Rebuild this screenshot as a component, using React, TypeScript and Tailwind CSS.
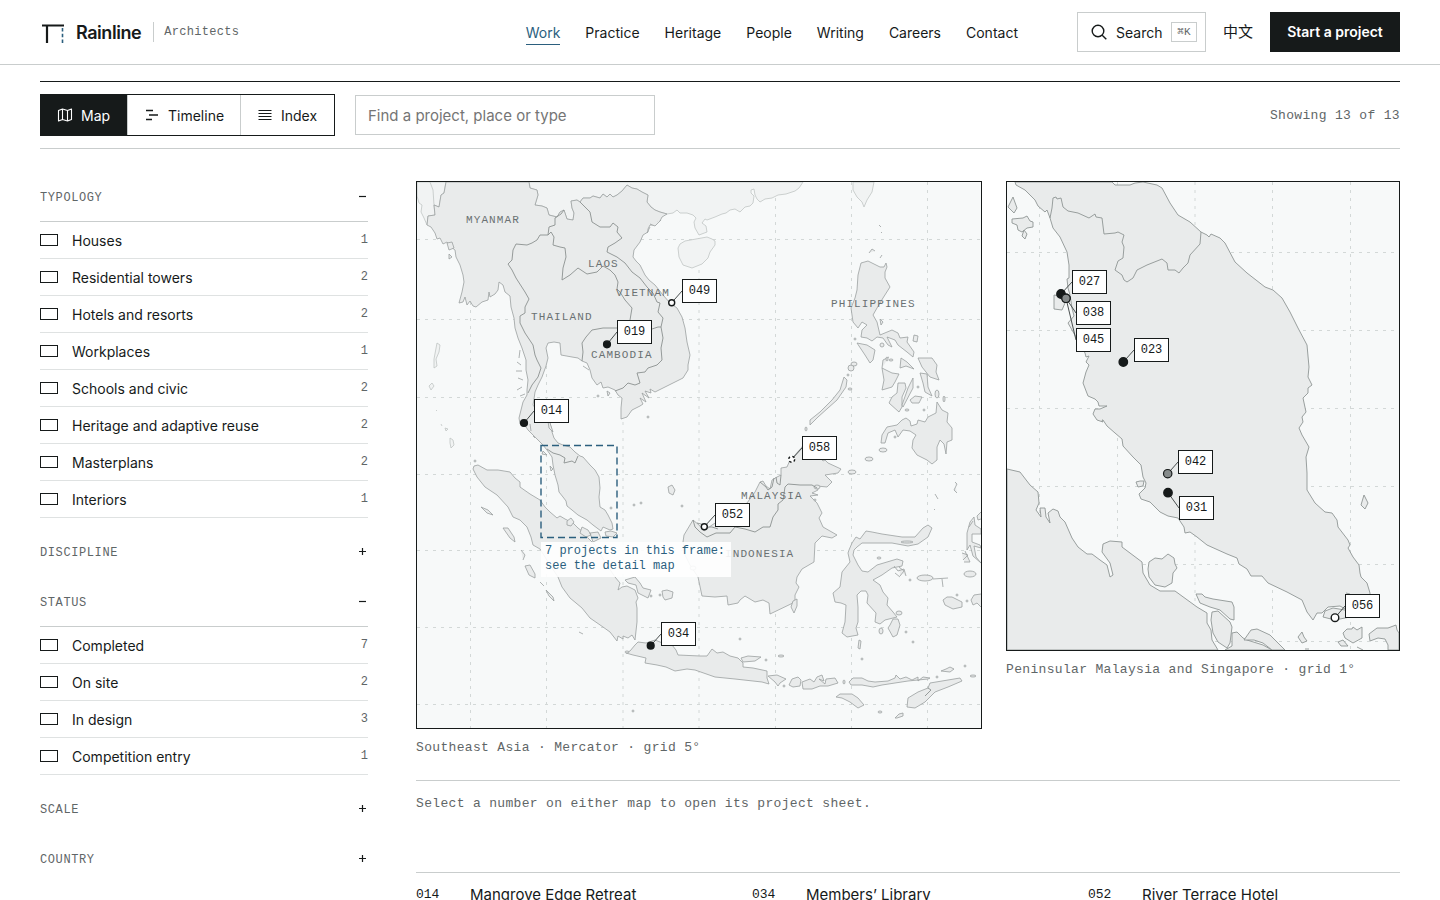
import type { ReactNode } from "react";

type Marker = "solid" | "grey" | "open" | "dashed";
type Pin = { id: string; x: number; y: number; bx: number; by: number; kind: Marker };
type Frame = { x: number; y: number; w: number; h: number };

const REGION: Frame = { x: 417, y: 182, w: 564, h: 546 };
const DETAIL: Frame = { x: 1007, y: 182, w: 392, h: 468 };

const regionPins: Pin[] = [
  { id: "049", x: 671.7, y: 302.7, bx: 682, by: 279, kind: "open" },
  { id: "019", x: 607, y: 344.3, bx: 617, by: 320, kind: "solid" },
  { id: "014", x: 524, y: 423, bx: 534, by: 399, kind: "solid" },
  { id: "058", x: 791.7, y: 459.3, bx: 802, by: 436, kind: "dashed" },
  { id: "052", x: 704.3, y: 526.7, bx: 715, by: 503, kind: "open" },
  { id: "034", x: 650.7, y: 645.7, bx: 661, by: 622, kind: "solid" },
];

const detailPins: Pin[] = [
  { id: "027", x: 1061, y: 294, bx: 1072, by: 270, kind: "solid" },
  { id: "038", x: 1066, y: 298.3, bx: 1076, by: 301, kind: "grey" },
  { id: "045", x: 1066, y: 298.3, bx: 1076, by: 328, kind: "grey" },
  { id: "023", x: 1123.3, y: 362, bx: 1134, by: 338, kind: "solid" },
  { id: "042", x: 1167.7, y: 473.7, bx: 1178, by: 450, kind: "grey" },
  { id: "031", x: 1168, y: 492.7, bx: 1179, by: 496, kind: "solid" },
  { id: "056", x: 1335, y: 617.7, bx: 1345, by: 594, kind: "open" },
];

const countries = [
  { name: "MYANMAR", x: 466, y: 223 },
  { name: "LAOS", x: 588, y: 267 },
  { name: "VIETNAM", x: 616, y: 296 },
  { name: "THAILAND", x: 531, y: 320 },
  { name: "CAMBODIA", x: 591, y: 358 },
  { name: "PHILIPPINES", x: 831, y: 307 },
  { name: "MALAYSIA", x: 741, y: 499 },
  { name: "INDONESIA", x: 725, y: 557 },
];

const neighbours = [
  "M417 182L446 182 444 193 441 195 439 207 434 205 435 215 428 216 427 225 424 218 421 212 422 205 419 203 417 196Z",
  "M430 182L433 190 434 205",
  "M529 182L530 188 537 190 538 195 535 205 542 206 547 208 549 215 557 217 560 212 564 210 567 219 573 220 574 213 572 208 571 201 577 200 580 202 583 198 590 198 593 196 600 198 603 194 607 197 610 194 613 197 617 195 622 191 627 185 632 188 637 189 642 192 648 195 647 202 651 207 655 210 660 212 667 214 673 213 677 210 680 213 687 213 693 215 696 218 694 222 695 228 699 235 707 232 706 226 702 223 705 219 707 220 715 217 722 214 726 213 730 210 735 209 740 212 745 207 750 206 753 203 754 196 751 193 751 190 754 189 755 195 757 199 760 202 765 199 772 198 778 195 786 194 795 191 799 188 803 182Z",
  "M678 248L680 244 685 241 696 239 707 237 712 239 715 241 715 245 710 252 708 258 702 264 692 268 683 265 679 257Z",
  "M853 182L853 190 857 197 862 202 864 207 867 200 872 192 874 182Z",
];

const mainland =
  "M446 182L529 182 530 188 537 190 538 195 535 205 542 206 547 208 549 215 557 217 560 212 564 210 567 219 573 220 574 213 572 208 571 201 577 200 580 202 583 198 590 198 593 196 600 198 603 194 607 197 610 194 613 197 617 195 622 191 627 185 632 188 637 189 642 192 648 195 647 202 651 207 655 210 660 212 667 214 662 217 660 221 657 222 655 225 650 225 648 229 648 232 643 235 640 242 634 250 633 257 636 261 640 265 645 275 649 280 655 285 663 295 670 303 677 308 682 317 685 328 687 342 690 355 688 365 688 370 683 378 673 383 663 388 655 392 650 389 651 393 645 391 649 398 642 393 646 402 640 398 643 404 640 406 632 410 627 417 621 419 621 408 622 398 618 395 615 390 608 387 603 388 601 382 597 385 592 378 590 370 587 363 582 361 578 358 572 357 561 355 560 343 554 342 548 343 546 348 548 358 546 366 542 377 538 385 535 392 534 399 533 405 538 412 548 415 550 423 552 432 554 438 558 443 563 445 570 447 575 452 580 456 583 457 590 465 595 470 599 477 600 488 599 497 600 507 605 510 608 515 612 523 613 529 610 530 603 527 601 531 593 525 587 520 578 515 572 510 567 506 566 501 563 497 559 492 558 485 555 475 553 465 552 457 547 450 543 445 538 440 533 435 528 430 524 424 520 424 519 418 521 410 523 402 527 395 527 390 528 380 526 370 526 360 522 348 518 338 515 328 514 318 511 307 510 296 505 292 503 285 499 282 498 290 495 294 490 297 489 292 488 300 482 302 476 307 473 306 470 301 467 305 465 297 463 302 459 303 462 292 464 282 463 275 460 265 456 257 455 250 451 247 447 242 443 244 440 238 437 239 435 233 431 227 427 225 428 216 435 215 434 205 439 207 441 195 444 193Z";

const mainlandBorders =
  "M564 210L561 214 555 218 555 225 549 227 548 235 540 235 537 240 532 243 527 245 516 244 513 250 512 260 508 264 512 270 516 278 525 292 529 299 525 307 525 313 520 316 520 323 525 333 533 345 535 355 537 360 541 368 538 377 532 385 528 393M548 235L551 232 554 237 553 245 560 247 565 248 566 257 563 268 562 280 570 275 578 268 587 274 597 272 603 266 610 270 615 275 618 282 617 289 620 292 625 300 632 308 630 320 631 330 617 328 603 328 592 330 586 337 582 343 583 352 582 361M631 330L640 331 652 329 658 327 661 327M580 202L585 207 590 212 592 222 600 227 610 227 613 223 618 227 617 232 622 238 615 243 608 247 607 252 617 257 625 263 632 272 640 278 647 287 653 293 657 302 660 303 658 312 663 318 661 327 663 338 661 348 662 360 657 365 648 368 645 372 637 373 640 383 635 385 628 383 623 388 615 391M547 449L553 453 560 455 565 458 564 463 572 461 575 463 578 456";

const islands = [
  "M474 466L478 465 487 470 498 470 510 472 515 478 520 482 520 487 530 494 540 500 545 507 550 512 557 518 560 516 565 519 573 523 578 528 583 532 588 538 595 545 605 562 615 577 620 583 618 590 622 587 627 586 635 590 638 598 636 602 637 608 637 622 635 640 632 635 628 638 623 636 623 639 618 636 617 641 610 632 603 627 590 618 582 608 570 598 562 587 558 577 550 565 540 549 533 545 531 537 527 527 520 520 513 517 508 507 497 495 485 487 477 477 473 469Z",
  "M626 653L630 651 635 645 638 642 646 643 655 640 665 644 672 645 676 650 678 655 700 656 707 656 712 649 717 653 723 652 730 656 738 658 743 663 743 667 753 668 767 671 767 678 769 684 762 682 735 679 715 677 695 670 687 669 675 671 666 667 657 665 645 663 646 658 633 655Z",
  "M741 658L748 656 761 657 755 661 743 662Z",
  "M768 676L777 675 786 679 780 683 778 686 775 682Z",
  "M789 685L792 679 798 677 801 680 800 686 793 687Z",
  "M802 682L810 679 814 682 817 677 822 675 824 681 819 679 825 684 826 679 835 678 838 683 828 686 820 686 812 689 803 689Z",
  "M849 682L853 678 862 678 868 681 875 682 888 681 895 678 896 675 900 679 906 677 912 680 918 677 918 681 923 677 930 678 928 679 908 681 895 683 882 685 873 687 862 685 851 685Z",
  "M836 697L840 694 852 694 858 698 864 705 858 708 850 702 842 698Z",
  "M907 707L908 698 918 692 928 688 930 683 942 681 960 678 962 681 948 687 935 692 925 702 915 708Z",
  "M895 718L899 714 903 713 903 716 897 718Z",
  "M941 671L946 669 950 667 954 669 950 672Z",
  "M683 542L684 535 687 530 693 520 699 525 704 531 712 525 720 520 735 512 747 503 755 492 760 482 763 481 766 486 770 489 772 480 777 477 781 475 781 468 787 467 790 460 795 455 802 447 806 438 812 442 818 455 823 461 825 460 828 463 841 469 838 473 825 475 832 482 827 487 817 486 818 490 812 493 818 495 810 496 817 503 822 513 819 518 823 527 837 535 832 538 822 536 815 543 814 562 802 569 797 577 796 583 799 587 795 595 795 602 770 614 769 603 763 600 755 602 750 599 745 596 740 600 738 603 728 605 727 596 715 597 702 596 698 577 690 565 685 555Z",
  "M810 425L810 420 820 412 832 400 840 390 844 377 847 380 846 387 837 400 828 408 818 417Z",
  "M861 263L868 261 880 267 884 267 886 263 887 267 885 272 885 278 890 287 883 298 877 308 873 315 877 322 880 335 892 330 898 333 900 338 908 337 907 342 914 352 913 357 907 352 898 345 895 340 887 337 892 347 888 345 883 338 877 337 872 341 867 338 861 337 862 330 867 325 862 322 858 328 853 322 851 308 855 298 857 290 858 275Z",
  "M857 343L867 345 875 350 873 360 870 363 865 355Z",
  "M918 358L932 358 937 365 936 372 939 380 930 377 922 367Z",
  "M920 373L927 374 928 387 932 396 925 392 923 383Z",
  "M901 358L907 362 914 369 906 366 900 368Z",
  "M882 368L892 373 899 374 895 382 892 387 882 390 884 380Z",
  "M898 383L905 383 906 388 902 397 902 407 899 412 889 403 892 397 897 393Z",
  "M913 378L913 388 903 407 902 405 908 388Z",
  "M910 400L915 396 922 397 919 403 912 403Z",
  "M937 402L942 410 948 413 947 422 952 428 952 440 947 442 946 454 944 444 940 440 937 447 937 460 932 464 927 460 917 455 912 448 913 440 916 435 910 431 903 430 898 437 895 430 888 433 885 443 881 443 882 435 887 427 897 425 902 420 906 418 910 421 911 426 917 424 918 420 925 422 928 417 936 413Z",
  "M849 550L852 543 856 537 860 539 866 531 872 532 882 534 902 537 915 537 923 528 928 525 932 528 928 537 918 544 908 546 892 543 862 543 857 547 854 550 853 555 858 565 862 571 868 572 877 565 897 559 903 561 902 566 892 568 882 575 873 580 880 585 883 592 888 598 887 605 893 612 897 617 885 620 880 624 875 622 876 613 867 603 868 595 866 591 861 591 857 595 858 607 858 622 856 628 858 635 847 637 842 633 845 622 846 605 841 603 835 602 833 593 840 587 842 572 850 562 848 553Z",
  "M890 625L893 619 898 619 900 625 897 635 893 637 888 628Z",
  "M859 640L861 641 860 649 858 648Z",
  "M625 580L635 577 640 583 643 588 651 590 648 598 638 593 636 585 628 583Z",
  "M662 591L667 590 673 592 672 598 665 600 663 597Z",
  "M981 512L977 516 978 520 981 519M967 550L967 533 970 522 974 517 975 525 981 529 981 534 972 534 972 542 980 545 981 548 974 546 976 557 981 563 973 556 970 545Z",
  "M943 600L947 597 952 597 962 602 962 607 953 609 945 605Z",
  "M981 594L974 595 971 600 973 605 977 603 981 607",
  "M933 579L948 578M942 579L943 587",
  "M481 507L488 510 493 515 487 513Z",
  "M503 528L508 528 514 537 515 542 510 538Z",
  "M525 566L530 565 535 574 535 578 529 575Z",
  "M521 550L525 555 523 560M546 590L553 597 554 601 549 596Z",
  "M540 582L544 586",
  "M579 632L583 634",
  "M668 487L672 485 675 490 673 495 669 493Z",
  "M547 414L553 432 549 428ZM567 521L571 518 574 522 571 526 567 525Z",
  "M582 527L588 530 591 535 586 537 580 533ZM590 533L598 532 601 538 593 542ZM605 532L611 531 617 533 613 537 606 536Z",
  "M880 319L883 322 881 325ZM914 335L918 336 917 342 913 341ZM889 357L883 360 882 368",
  "M522 371L516 371M523 380L518 378M522 387L517 390M525 394L520 396M520 350L519 358M517 362L521 365",
  "M447 243L452 242 454 248 449 250ZM449 254L452 257 449 259Z",
  "M650 224L655 226 661 220M647 233L650 227",
  "M607 391L610 393 608 396ZM589 370L583 366M530 424L531 431M533 436L535 438M543 451L547 455 542 454Z",
  "M550 466L553 469 551 471Z",
  "M894 566L898 571 904 569 906 576M899 567L904 571 900 576M895 573L900 577",
  "M962 553L968 555 963 560M965 551L970 562 964 562M973 521L969 527",
  "M797 599L793 601 791 607 794 613 797 606Z",
  "M879 225L881 227M881 232L882 233M869 253L872 249 875 251M880 258L882 255",
  "M955 482L957 484 954 490 957 493M935 494L938 499M934 509L935 510",
];

const farIslands = [
  "M437 343L440 345 439 352 436 359 437 366 434 368 434 359ZM432 383L434 386 431 390 429 386Z",
  "M436 410L437 411M441 424L442 426M445 428L448 429 446 431ZM450 438L453 440 454 445 451 448 450 443Z",
];

const islets: [number, number, number, number][] = [
  [634, 505, 1, 1], [641, 503, 1, 1], [682, 506, 1, 1], [611, 508, 1, 1], [648, 417, 1, 1], [475, 461, 1, 1],
  [883, 450, 4, 2], [869, 459, 4, 2], [852, 472, 4, 2], [806, 429, 1, 2], [850, 389, 2, 1], [848, 375, 1, 1],
  [851, 368, 3, 3], [854, 364, 3, 2], [882, 345, 2, 2], [887, 359, 1, 2], [891, 360, 2, 1], [895, 437, 1, 1],
  [907, 410, 2, 1], [924, 410, 1, 1], [937, 394, 2, 4], [944, 399, 1, 3], [918, 387, 1, 1], [817, 487, 3, 2],
  [815, 500, 1, 1], [925, 578, 8, 3], [970, 574, 6, 3], [967, 601, 1, 1], [907, 542, 6, 1], [879, 558, 2, 1],
  [910, 580, 1, 1], [899, 613, 3, 2], [881, 631, 2, 3], [906, 632, 1, 1], [913, 642, 1, 1], [740, 639, 1, 1],
  [781, 656, 3, 1], [766, 660, 1, 1], [862, 659, 1, 1], [880, 712, 2, 1], [965, 666, 1, 1], [973, 676, 3, 1],
  [844, 682, 1, 2], [784, 686, 1, 1], [937, 677, 1, 1], [633, 711, 1, 1], [651, 596, 1, 1], [660, 595, 1, 1],
  [627, 652, 2, 1], [693, 568, 3, 2], [855, 339, 1, 1], [598, 396, 1, 1], [957, 595, 1, 1],
];

const borneoBorders =
  "M693 520L695 527 700 532 707 537 716 533 725 533 730 533 735 527 745 529 755 532 763 527 770 527 773 517 778 510 778 504 783 500 785 487 788 484 800 485 812 485 817 488M760 482L766 487 768 490 772 487 774 478M776 477L777 483 780 485 781 475M704 527L712 527 718 529M697 523L705 525M928 688L931 690 925 696";

const detailMainland =
  "M1015 182L1016 185 1025 190 1035 200 1038 206 1045 212 1047 210 1050 218 1053 228 1060 237 1067 252 1069 265 1069 278 1067 279 1068 288 1070 295 1072 308 1074 316 1068 323 1076 337 1085 353 1086 357 1089 356 1086 362 1089 365 1086 372 1083 383 1088 396 1095 399 1098 402 1099 406 1107 406 1100 409 1095 409 1093 414 1097 420 1103 422 1102 420 1103 420 1107 426 1115 433 1122 439 1123 446 1133 457 1141 465 1143 477 1146 483 1145 488 1139 494 1141 499 1150 502 1160 512 1168 516 1178 518 1184 527 1185 533 1190 532 1197 537 1207 545 1227 554 1237 558 1239 564 1247 569 1251 576 1262 576 1268 583 1287 592 1302 600 1307 612 1313 620 1317 613 1322 613 1328 607 1340 606 1347 610 1357 612 1370 607 1370 593 1367 583 1361 577 1360 573 1359 565 1353 557 1348 548 1350 545 1348 540 1338 527 1337 520 1332 513 1325 512 1315 503 1307 490 1307 473 1306 457 1309 447 1302 435 1299 428 1303 422 1302 417 1306 412 1303 398 1308 393 1308 388 1312 385 1308 377 1309 367 1307 345 1298 328 1290 312 1282 298 1273 290 1265 287 1256 280 1247 273 1235 262 1225 243 1220 238 1211 234 1209 237 1207 235 1201 232 1190 222 1178 215 1170 203 1162 188 1157 185 1143 182 1135 183 1130 185 1115 185 1112 182Z";

const detailBorder =
  "M1050 218L1052 208 1053 198 1056 197 1057 199 1061 198 1063 207 1068 211 1078 213 1089 218 1095 214 1096 217 1102 218 1103 226 1104 234 1115 233 1118 232 1124 235 1122 242 1124 247 1123 258 1118 261 1115 270 1122 275 1124 280 1127 282 1133 278 1137 270 1147 265 1162 259 1167 263 1168 270 1175 270 1179 273 1183 268 1188 263 1190 255 1200 244 1201 232";

const detailIslands = [
  "M1007 469L1020 472 1030 485 1038 492 1039 503 1036 510 1041 517 1040 508 1045 508 1046 517 1050 523 1048 513 1053 509 1058 511 1060 517 1065 522 1072 538 1078 547 1087 554 1092 554 1100 560 1107 565 1110 577 1113 575 1110 563 1102 552 1103 544 1110 541 1122 542 1122 547 1142 562 1143 573 1150 585 1160 591 1175 591 1197 607 1207 613 1207 623 1211 630 1212 640 1218 650 1007 650Z",
  "M1149 562L1155 558 1162 559 1168 554 1174 558 1175 564 1177 568 1173 573 1172 583 1165 587 1155 585 1149 577 1148 569Z",
  "M1196 594L1202 594 1205 597 1213 599 1232 602 1234 607 1234 620 1230 619 1220 610 1210 607 1200 603Z",
  "M1212 612L1218 611 1230 622 1232 627 1230 643 1227 648 1218 642 1213 633 1211 620Z",
  "M1225 650L1232 646 1232 633 1237 632 1243 638 1247 640 1263 645 1272 650Z",
  "M1244 640L1251 630 1257 629 1270 635 1285 650 1272 650 1263 643 1254 640Z",
  "M1323 617L1325 611 1333 608 1345 610 1350 617 1335 620Z",
  "M1298 637L1302 632 1304 637 1307 641 1302 643Z",
  "M1343 633L1347 629 1352 629 1353 627 1357 630 1362 627 1362 638 1353 643 1345 638Z",
  "M1338 642L1343 640 1348 646 1341 646Z",
  "M1369 634L1377 628 1388 628 1396 625 1397 630 1399 633 1399 650 1388 650 1388 645 1385 639 1378 638 1370 641Z",
  "M1364 495L1368 503 1365 509 1361 505Z",
  "M1054 295L1067 297 1065 303 1062 310 1054 309Z",
  "M1013 197L1017 208 1014 213 1008 207Z",
  "M1012 219L1023 218 1027 216 1030 221 1033 222 1033 227 1027 228 1022 232 1018 230 1017 225 1012 223Z",
  "M1024 230L1027 234 1025 239 1022 236Z",
  "M1136 482L1140 481 1144 481 1143 486 1138 487ZM1346 593L1350 594M1357 647L1363 650M1305 649L1309 649",
];

const across = (value: number) => `${value * 100}%`;

function MapPin({ pin, frame }: { pin: Pin; frame: Frame }) {
  return (
    <button
      type="button"
      aria-label={`Project ${pin.id}`}
      className="absolute flex h-6 w-[35px] items-center justify-center border border-[#161a1a] bg-white font-['Liberation_Mono',monospace] text-[12px] leading-none text-[#161a1a]"
      style={{ left: across((pin.bx - frame.x) / frame.w), top: across((pin.by - frame.y) / frame.h) }}
    >
      {pin.id}
    </button>
  );
}

function Markers({ pins, r }: { pins: Pin[]; r: number }) {
  return (
    <g>
      {pins.map((p) => (
        <path key={p.id} d={`M${p.x} ${p.y}L${p.bx} ${p.by + 12}`} stroke="#4a5050" strokeWidth="1" />
      ))}
      {pins.map((p) => (
        <circle
          key={p.id}
          cx={p.x}
          cy={p.y}
          r={p.kind === "open" || p.kind === "dashed" ? r - 1 : r - 0.6}
          fill={p.kind === "solid" ? "#161a1a" : p.kind === "grey" ? "#868b8b" : "#ffffff"}
          stroke="#161a1a"
          strokeWidth={p.kind === "grey" ? 1.2 : 1.4}
          strokeDasharray={p.kind === "dashed" ? "2.4 2.4" : undefined}
        />
      ))}
    </g>
  );
}

function Grid({ xs, ys, frame }: { xs: number[]; ys: number[]; frame: Frame }) {
  return (
    <g stroke="#d3d8d7" strokeWidth="1" strokeDasharray="3 5">
      {xs.map((x) => (
        <path key={x} d={`M${x} ${frame.y}V${frame.y + frame.h}`} />
      ))}
      {ys.map((y) => (
        <path key={y} d={`M${frame.x} ${y}H${frame.x + frame.w}`} />
      ))}
    </g>
  );
}

function RegionMap() {
  return (
    <figure>
      <div className="relative border border-[#161a1a] bg-[#f7f9f9]">
        <svg viewBox="417 182 564 546" className="block w-full" fill="none" role="img" aria-label="Southeast Asia">
          <Grid frame={REGION} xs={[470.5, 546.5, 623, 699, 775.5, 851.5, 927.5]} ys={[239.5, 319.5, 397.5, 474.5, 550.5, 627.5, 704.5]} />
          <g fill="#f1f3f3" stroke="#c0c5c4" strokeWidth="0.8" strokeLinejoin="round">
            {neighbours.map((d) => (
              <path key={d} d={d} />
            ))}
            {farIslands.map((d) => (
              <path key={d} d={d} />
            ))}
          </g>
          <g fill="#e9ebeb" stroke="#9aa09f" strokeWidth="0.8" strokeLinejoin="round">
            <path d={mainland} />
            {islands.map((d) => (
              <path key={d} d={d} />
            ))}
            {islets.map(([cx, cy, rx, ry]) => (
              <ellipse key={`${cx}-${cy}`} cx={cx} cy={cy} rx={rx} ry={ry} />
            ))}
          </g>
          <g stroke="#8b9190" strokeWidth="0.9" strokeLinejoin="round">
            <path d={mainlandBorders} />
            <path d={borneoBorders} />
          </g>
          <g className="font-['Liberation_Mono',monospace] text-[11px] tracking-widest" fill="#6a7172">
            {countries.map((c) => (
              <text key={c.name} x={c.x} y={c.y}>
                {c.name}
              </text>
            ))}
          </g>
          <rect x="541" y="445.5" width="76" height="92" stroke="#2b5f7e" strokeWidth="1.4" strokeDasharray="7 4" />
          <Markers pins={regionPins} r={4} />
        </svg>
        <p
          className="absolute w-[190px] bg-white/90 pt-0.5 pb-[3px] pl-1 font-['Liberation_Mono',monospace] text-[12px] leading-[15px] text-[#2b5f7e]"
          style={{ left: across(124 / 564), top: across(360 / 546) }}
        >
          7 projects in this frame:
          <br />
          see the detail map
        </p>
        {regionPins.map((p) => (
          <MapPin key={p.id} pin={p} frame={REGION} />
        ))}
      </div>
      <Caption>Southeast Asia · Mercator · grid 5°</Caption>
    </figure>
  );
}

function DetailMap() {
  return (
    <figure>
      <div className="relative border border-[#161a1a] bg-[#f7f9f9]">
        <svg viewBox="1007 182 392 468" className="block w-full" fill="none" role="img" aria-label="Peninsular Malaysia and Singapore">
          <Grid frame={DETAIL} xs={[1039.5, 1117.5, 1195, 1272.5, 1350.5]} ys={[252.5, 330.5, 408.5, 486.5, 564.5, 641.5]} />
          <g fill="#e9ebeb" stroke="#8f9594" strokeWidth="0.9" strokeLinejoin="round">
            <path d={detailMainland} />
            {detailIslands.map((d) => (
              <path key={d} d={d} />
            ))}
            <path d={detailBorder} fill="none" />
          </g>
          <Markers pins={detailPins} r={4.8} />
        </svg>
        {detailPins.map((p) => (
          <MapPin key={p.id} pin={p} frame={DETAIL} />
        ))}
      </div>
      <Caption>Peninsular Malaysia and Singapore · grid 1°</Caption>
    </figure>
  );
}

function Caption({ children }: { children: ReactNode }) {
  return (
    <figcaption className="pt-[9px] font-['Liberation_Mono',monospace] text-[13px] leading-[19px] tracking-wide text-[#5f6667]">
      {children}
    </figcaption>
  );
}

type Option = { label: string; count: number };

function FilterGroup({ title, options }: { title: string; options?: Option[] }) {
  return (
    <section>
      <button
        type="button"
        aria-expanded={Boolean(options)}
        className="flex h-8 w-full items-center justify-between font-['Liberation_Mono',monospace] text-[12px] tracking-wider text-[#5f6667]"
      >
        <span className="pt-0.5">{title}</span>
        <svg width="11" height="12" viewBox="0 0 11 12" stroke="#161a1a" strokeWidth="1.2" aria-hidden="true">
          <path d={options ? "M2 5.5H9" : "M2 5.5H9M5.5 2V9"} />
        </svg>
      </button>
      {options && (
        <ul className="mt-2 border-t border-[#c9cdcd]">
          {options.map((o) => (
            <li key={o.label} className="border-b border-[#dfe2e2]">
              <label className="flex h-9 items-center text-[14px]">
                <input
                  type="checkbox"
                  className="mr-3.5 h-3 w-[18px] shrink-0 appearance-none border border-[#161a1a] bg-white checked:bg-[#161a1a]"
                />
                <span>{o.label}</span>
                <span className="ml-auto font-['Liberation_Mono',monospace] text-[12px] text-[#5f6667]">{o.count}</span>
              </label>
            </li>
          ))}
        </ul>
      )}
    </section>
  );
}

const typology: Option[] = [
  { label: "Houses", count: 1 },
  { label: "Residential towers", count: 2 },
  { label: "Hotels and resorts", count: 2 },
  { label: "Workplaces", count: 1 },
  { label: "Schools and civic", count: 2 },
  { label: "Heritage and adaptive reuse", count: 2 },
  { label: "Masterplans", count: 2 },
  { label: "Interiors", count: 1 },
];

const status: Option[] = [
  { label: "Completed", count: 7 },
  { label: "On site", count: 2 },
  { label: "In design", count: 3 },
  { label: "Competition entry", count: 1 },
];

const nav = ["Work", "Practice", "Heritage", "People", "Writing", "Careers", "Contact"];

const projects = [
  { id: "014", name: "Mangrove Edge Retreat" },
  { id: "034", name: "Members’ Library" },
  { id: "052", name: "River Terrace Hotel" },
];

function Header() {
  return (
    <header className="border-b border-[#c9cdcd]">
      <div className="flex h-16 items-center px-10">
        <a href="#home" className="flex items-center">
          <svg width="26" height="24" viewBox="0 0 26 24" fill="none" aria-hidden="true">
            <path d="M2 5.5H24" stroke="#161a1a" strokeWidth="2" />
            <path d="M7 5V23" stroke="#161a1a" strokeWidth="2.2" />
            <path d="M22.5 8V23" stroke="#2b5f7e" strokeWidth="1.6" strokeDasharray="3.4 2.4" />
          </svg>
          <span className="ml-2.5 text-[18px] font-semibold tracking-tight">Rainline</span>
          <span className="ml-3 flex h-5 items-center border-l border-[#c9cdcd] pl-2.5 font-['Liberation_Mono',monospace] text-[12px] tracking-wide text-[#5f6667]">
            Architects
          </span>
        </a>
        <nav className="mr-[59px] ml-auto flex gap-[25px] text-[14px] leading-[22px]">
          {nav.map((n) => (
            <a
              key={n}
              href={`#${n.toLowerCase()}`}
              className={n === "Work" ? "border-b border-[#2b5f7e] pt-[3px] text-[#2b5f7e]" : "border-b border-transparent pt-[3px]"}
            >
              {n}
            </a>
          ))}
        </nav>
        <button type="button" className="flex h-10 w-[129px] items-center border border-[#c9cdcd] pl-3 text-[14px]">
          <svg width="18" height="18" viewBox="0 0 18 18" fill="none" stroke="#161a1a" strokeWidth="1.4" aria-hidden="true">
            <circle cx="8" cy="8" r="5.8" />
            <path d="M12.2 12.2L16.3 16.3" />
          </svg>
          <span className="ml-2">Search</span>
          <kbd className="mr-2 ml-auto flex h-5 w-[26px] items-center justify-center border border-[#c9cdcd] font-['Liberation_Mono',monospace] text-[11px] text-[#5f6667]">
            ⌘K
          </kbd>
        </button>
        <a href="#zh" lang="zh" className="mx-[17px] text-[15px]">
          中文
        </a>
        <a href="#start" className="flex h-10 w-[130px] items-center justify-center bg-[#161a1a] pb-0.5 text-[14px] font-semibold text-white">
          Start a project
        </a>
      </div>
    </header>
  );
}

function Toolbar() {
  return (
    <div className="mt-4 flex items-center border-t border-t-[#161a1a] border-b border-b-[#c9cdcd] py-3">
      <div className="flex h-[42px] border border-[#161a1a] text-[14px]">
        <button type="button" aria-pressed="true" className="flex w-[86px] items-center gap-2 bg-[#161a1a] pl-4 text-white">
          <svg width="16" height="16" viewBox="0 0 16 16" fill="none" stroke="currentColor" strokeWidth="1.1" strokeLinejoin="round" aria-hidden="true">
            <path d="M1.5 3.5L5.5 2 10.5 3.5 14.5 2V12.5L10.5 14 5.5 12.5 1.5 14ZM5.5 2V12.5M10.5 3.5V14" />
          </svg>
          Map
        </button>
        <button type="button" aria-pressed="false" className="flex w-[113px] items-center gap-2 border-l border-[#c9cdcd] pl-4">
          <svg width="16" height="16" viewBox="0 0 16 16" fill="none" stroke="currentColor" strokeWidth="1.3" aria-hidden="true">
            <path d="M2 3.5H9M5 8H14M2 12.5H8" />
          </svg>
          Timeline
        </button>
        <button type="button" aria-pressed="false" className="flex w-[94px] items-center gap-2 border-l border-[#c9cdcd] pl-4">
          <svg width="16" height="16" viewBox="0 0 16 16" fill="none" stroke="currentColor" strokeWidth="1.1" aria-hidden="true">
            <path d="M1.5 3.5H14.5M1.5 6.5H14.5M1.5 9.5H14.5M1.5 12.5H14.5" />
          </svg>
          Index
        </button>
      </div>
      <input
        type="search"
        aria-label="Find a project, place or type"
        placeholder="Find a project, place or type"
        className="ml-5 h-10 w-[300px] border border-[#c9cdcd] px-3 text-[15px] placeholder:text-[#757575]"
      />
      <p className="ml-auto pt-0.5 font-['Liberation_Mono',monospace] text-[13px] tracking-wide text-[#5f6667]">Showing 13 of 13</p>
    </div>
  );
}

export default function App() {
  return (
    <div className="h-screen overflow-hidden bg-white font-[Inter,'Noto_Sans_CJK_SC',sans-serif] text-[#161a1a]">
      <Header />
      <main className="px-10">
        <Toolbar />
        <div className="mt-8 grid grid-cols-[328px_minmax(0,1fr)] gap-12">
          <aside className="flex flex-col gap-[18px]">
            <FilterGroup title="TYPOLOGY" options={typology} />
            <FilterGroup title="DISCIPLINE" />
            <FilterGroup title="STATUS" options={status} />
            <FilterGroup title="SCALE" />
            <FilterGroup title="COUNTRY" />
            <button type="button" disabled className="self-start pt-0.5 text-[14px] text-[#b9bebe]">
              Clear all
            </button>
          </aside>
          <div>
            <div className="grid grid-cols-[566fr_394fr] items-start gap-6">
              <RegionMap />
              <DetailMap />
            </div>
            <p className="mt-[23px] border-t border-[#c9cdcd] pt-[13px] font-['Liberation_Mono',monospace] text-[13px] leading-5 tracking-wide text-[#5f6667]">
              Select a number on either map to open its project sheet.
            </p>
            <ul className="mt-[58px] grid grid-cols-3 gap-x-6 border-t border-[#c9cdcd] pt-2.5">
              {projects.map((p) => (
                <li key={p.id}>
                  <a href={`#project-${p.id}`} className="flex items-center text-[15px] leading-[22px]">
                    <span className="w-[54px] pt-px font-['Liberation_Mono',monospace] text-[13px]">{p.id}</span>
                    {p.name}
                  </a>
                </li>
              ))}
            </ul>
          </div>
        </div>
      </main>
    </div>
  );
}
